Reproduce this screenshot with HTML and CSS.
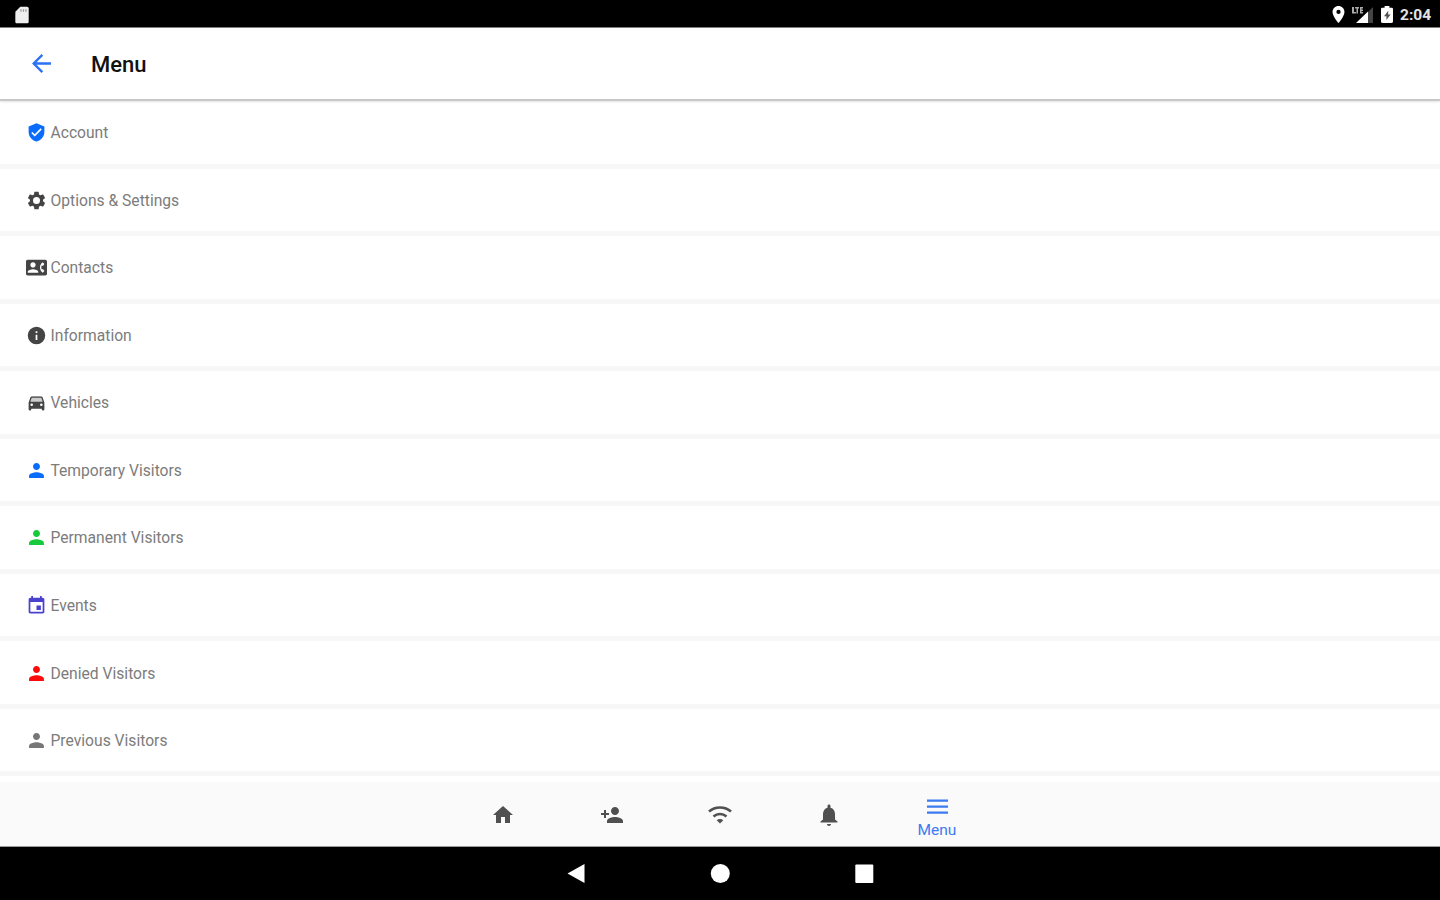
FILE: index.html
```html
<!DOCTYPE html>
<html lang="en">
<head>
<meta charset="utf-8">
<title>Menu</title>
<link rel="stylesheet" href="styles.css">
</head>
<body>
<div class="screen">
  <div class="status">
    <svg class="sd" viewBox="0 0 24 24"><path d="M18 2h-8L4.020 8 4 20c0 1.100.9 2 2 2h12c1.100 0 2-.9 2-2V4c0-1.100-.9-2-2-2z"/><path class="notch" d="M10 5h1.500v3H10zM13 5h1.500v3H13zM16 5h1.500v3H16z"/></svg>
    <div class="status-right">
      <svg class="pin" viewBox="5 2 14 20"><path d="M12 2C8.130 2 5 5.130 5 9c0 5.250 7 13 7 13s7-7.750 7-13c0-3.870-3.130-7-7-7zm0 9.500a2.500 2.500 0 0 1 0-5 2.500 2.500 0 0 1 0 5z"/></svg>
      <svg class="signal" viewBox="0 0 22 18"><path class="dim" d="M16 6L21 1v16h-5z"/><path d="M4 17L16 5.500V17z"/><path class="lte" d="M0 1h2v5h2v1.500H0zM3 1h4v1.500H6v5H4.500v-5H3zM8 1h3v1.500H9.500v1H11V5H9.500v1H11v1.500H8z"/></svg>
      <svg class="battery" viewBox="7 2 10 20" preserveAspectRatio="none"><path d="M15.670 4H14V2h-4v2H8.330C7.600 4 7 4.600 7 5.330v15.330C7 21.400 7.600 22 8.330 22h7.330c.74 0 1.340-.6 1.340-1.330V5.330C17 4.600 16.400 4 15.670 4z"/><path class="bolt" d="M11.500 18.500v-4.500H9.500L13 7.500V12h2z"/></svg>
      <span class="clock">2:04</span>
    </div>
  </div>
  <header class="header">
    <svg class="back" viewBox="4 4 16 16"><path d="M20 11H7.830l5.590-5.590L12 4l-8 8 8 8 1.410-1.410L7.830 13H20v-2z"/></svg>
    <h1 class="title">Menu</h1>
  </header>
  <main class="list">
    <div class="row"><svg class="icon blue" viewBox="0 0 24 24"><path d="M12 1.500L3 5v6c0 5.550 3.840 10 9 11.300 5.160-1.260 9-5.750 9-11.300V5l-9-3.500zm-2 15.200l-4-4 1.410-1.410L10 13.870l6.590-6.590L18 8.700l-8 8z"/></svg><span class="label">Account</span></div>
    <div class="row"><svg class="icon" viewBox="0 0 24 24"><path d="M19.430 12.980c.04-.32.07-.64.07-.98s-.03-.66-.07-.98l2.110-1.650c.19-.15.24-.42.12-.64l-2-3.460c-.12-.22-.39-.3-.61-.22l-2.490 1c-.52-.4-1.080-.73-1.690-.98l-.38-2.650C14.460 2.180 14.250 2 14 2h-4c-.25 0-.46.18-.49.42l-.38 2.650c-.61.25-1.170.59-1.690.98l-2.490-1c-.23-.09-.49 0-.61.22l-2 3.460c-.13.22-.07.49.12.64l2.110 1.650c-.04.32-.07.65-.07.98s.03.66.07.98l-2.110 1.650c-.19.15-.24.42-.12.64l2 3.460c.12.22.39.3.61.22l2.490-1c.52.4 1.080.73 1.690.98l.38 2.650c.03.24.24.42.49.42h4c.25 0 .46-.18.49-.42l.38-2.650c.61-.25 1.170-.59 1.690-.98l2.490 1c.23.09.49 0 .61-.22l2-3.460c.12-.22.07-.49-.12-.64l-2.110-1.650zM12 16a4 4 0 0 1 0-8 4 4 0 0 1 0 8z"/></svg><span class="label">Options &amp; Settings</span></div>
    <div class="row"><svg class="icon" viewBox="0 0 24 24"><path d="M22 3H2C.9 3 0 3.900 0 5v14c0 1.100.9 2 2 2h20c1.100 0 1.990-.9 1.990-2L24 5c0-1.100-.9-2-2-2zM8 6c1.660 0 3 1.340 3 3s-1.340 3-3 3-3-1.340-3-3 1.340-3 3-3zm6 12H2v-1c0-2 4-3.100 6-3.100s6 1.100 6 3.100v1zm3.850-4h1.640L21 16l-1.990 1.990c-1.310-.98-2.280-2.380-2.730-3.990-.18-.64-.28-1.310-.28-2s.1-1.360.28-2c.45-1.620 1.420-3.010 2.730-3.990L21 8l-1.510 2h-1.640c-.22.63-.35 1.300-.35 2s.13 1.370.35 2z"/></svg><span class="label">Contacts</span></div>
    <div class="row"><svg class="icon" viewBox="0 0 24 24"><path d="M12 2a10 10 0 1 0 0 20 10 10 0 0 0 0-20zm1 15h-2v-6h2v6zm0-8h-2V7h2v2z"/></svg><span class="label">Information</span></div>
    <div class="row"><svg class="icon car" viewBox="0 0 24 24"><path class="roof" d="M6.500 5h11l2.300 7H4.200z"/><path d="M18.920 6.010C18.720 5.420 18.160 5 17.500 5h-11c-.66 0-1.210.42-1.420 1.010L3 12v8c0 .55.45 1 1 1h1c.55 0 1-.45 1-1v-1h12v1c0 .55.45 1 1 1h1c.55 0 1-.45 1-1v-8l-2.080-5.990zM6.500 16a1.500 1.500 0 1 1 0-3 1.500 1.500 0 0 1 0 3zm11 0a1.500 1.500 0 1 1 0-3 1.500 1.500 0 0 1 0 3zM5 11l1.500-4.500h11L19 11H5z"/></svg><span class="label">Vehicles</span></div>
    <div class="row"><svg class="icon blue" viewBox="0 0 24 24"><use href="#person"/></svg><span class="label">Temporary Visitors</span></div>
    <div class="row"><svg class="icon green" viewBox="0 0 24 24"><use href="#person"/></svg><span class="label">Permanent Visitors</span></div>
    <div class="row"><svg class="icon indigo" viewBox="0 0 24 24"><path d="M17 12h-5v5h5v-5zM16 1v2H8V1H6v2H5c-1.110 0-1.990.9-1.990 2L3 19c0 1.100.89 2 2 2h14c1.100 0 2-.9 2-2V5c0-1.100-.9-2-2-2h-1V1h-2zm3 18H5V8h14v11z"/></svg><span class="label">Events</span></div>
    <div class="row"><svg class="icon red" viewBox="0 0 24 24"><use href="#person"/></svg><span class="label">Denied Visitors</span></div>
    <div class="row"><svg class="icon gray" viewBox="0 0 24 24"><path id="person" d="M12 11.500c2.210 0 4-1.790 4-4s-1.790-4-4-4-4 1.790-4 4 1.790 4 4 4zm0 2.500c-2.670 0-8.500 1.340-8.500 4v2.500h17V18c0-2.660-5.830-4-8.500-4z"/></svg><span class="label">Previous Visitors</span></div>
  </main>
  <nav class="tabs">
    <div class="tab"><svg class="tab-icon" viewBox="0 0 24 24"><path d="M10 20v-6h4v6h5v-8h3L12 3 2 12h3v8z"/></svg></div>
    <div class="tab"><svg class="tab-icon add" viewBox="0 0 24 24"><path d="M15 12c2.210 0 4-1.790 4-4s-1.790-4-4-4-4 1.790-4 4 1.790 4 4 4zm-9-2V7H4v3H1v2h3v3h2v-3h3v-2H6zm9 4c-2.670 0-8 1.340-8 4v2h16v-2c0-2.660-5.330-4-8-4z"/></svg></div>
    <div class="tab"><svg class="tab-icon wifi" viewBox="0 0 26 26"><path class="arc" d="M2 9.500C8 4 18 4 24 9.500M6.500 14.500c3.700-3.300 9.300-3.300 13 0"/><path d="M13 21.500l-3.300-3.300c1.900-1.600 4.700-1.600 6.600 0z"/></svg></div>
    <div class="tab"><svg class="tab-icon bell" viewBox="0 0 24 24"><path d="M12 23c1.100 0 2-.9 2-2h-4c0 1.100.89 2 2 2zm6-6.500v-5.500c0-3.070-1.640-5.640-4.500-6.320V3c0-.83-.67-1.500-1.500-1.500s-1.500.67-1.500 1.500v1.680C7.630 5.360 6 7.920 6 11v5.500l-2.500 2v1h17v-1l-2.500-2z"/></svg></div>
    <div class="tab active"><svg class="burger" viewBox="0 0 21 16"><path d="M0 .5h21v2.200H0zM0 6.500h21v2.200H0zM0 12.500h21v2.200H0z"/></svg><span class="tab-label">Menu</span></div>
  </nav>
  <footer class="system">
    <svg class="sys" viewBox="0 0 20 20"><path d="M1.500 9.500L18.500 0v19z"/></svg>
    <svg class="sys" viewBox="0 0 20 20"><circle cx="10.300" cy="9.500" r="9.500"/></svg>
    <svg class="sys" viewBox="0 0 20 20"><rect x="1.300" y=".5" width="18" height="18.500" rx="1"/></svg>
  </footer>
</div>
</body>
</html>
```
FILE: styles.css
```css
* { box-sizing: border-box; }
body { margin: 0; background: #fff; font-family: Roboto, "Liberation Sans", sans-serif; }
svg { display: block; flex: none; fill: currentColor; }
.screen { width: 1440px; height: 900px; display: flex; flex-direction: column; overflow: hidden; }
.status { height: 28px; flex: none; background: #000; color: #fff; display: flex; align-items: center; justify-content: space-between; padding: 2px 8px 0 12px; border-bottom: 1px solid #777; }
.sd { width: 20px; height: 20px; color: #eee; }
.notch { fill: #999; }
.status-right { display: flex; align-items: center; }
.pin { width: 13px; height: 17px; margin-right: 7px; }
.signal { width: 22px; height: 18px; margin-right: 7px; }
.dim { fill: #444; }
.lte { fill: #aaa; }
.battery { width: 12px; height: 17px; margin-right: 7px; }
.bolt { fill: #555; }
.clock { font-size: 15.500px; line-height: 18px; font-weight: 700; width: 32px; padding-top: 1px; color: #e4e4e4; }
.header { height: 73px; flex: none; display: flex; align-items: center; padding: 0 32px; border-bottom: 2px solid #c8c8c8; box-shadow: 0 1px 2px #e4e4e4; position: relative; }
.back { width: 19px; height: 19px; color: #2b72f5; }
.title { margin: 3px 0 0 40px; font-size: 22px; line-height: 28px; font-weight: 500; color: #111; }
.list { flex: 1; min-height: 0; overflow: hidden; }
.row { height: 67.540px; display: flex; align-items: center; padding: 1px 26px 0; border-bottom: 5px solid #f7f7f7; color: #444; }
.icon { width: 21px; height: 21px; }
.blue { color: #0a6cfb; }
.green { color: #16ca3b; }
.indigo { color: #4a42cf; }
.red { color: #fb0b0b; }
.gray { color: #777; }
.roof { fill: #ccc; }
.label { margin-left: 3.500px; padding-top: 1px; font-size: 15.650px; line-height: 20px; color: #7c7c7c; white-space: nowrap; }
.tabs { height: 65px; flex: none; background: #fafafa; display: flex; justify-content: center; border-bottom: 1px solid #999; }
.tab { width: 108.500px; display: flex; flex-direction: column; align-items: center; justify-content: center; padding-top: 2px; color: #505050; }
.tab-icon { width: 24px; height: 24px; }
.add { width: 26px; }
.wifi { width: 26px; height: 26px; }
.arc { fill: none; stroke: currentColor; stroke-width: 2.500; }
.active { color: #3d7bf0; }
.burger { width: 21px; height: 16px; margin-top: 8px; }
.tab-label { margin-top: 6px; font-size: 15.500px; line-height: 18px; }
.system { height: 53px; flex: none; background: #000; color: #fff; display: flex; justify-content: center; align-items: center; gap: 124px; }
.sys { width: 20px; height: 20px; }
```
